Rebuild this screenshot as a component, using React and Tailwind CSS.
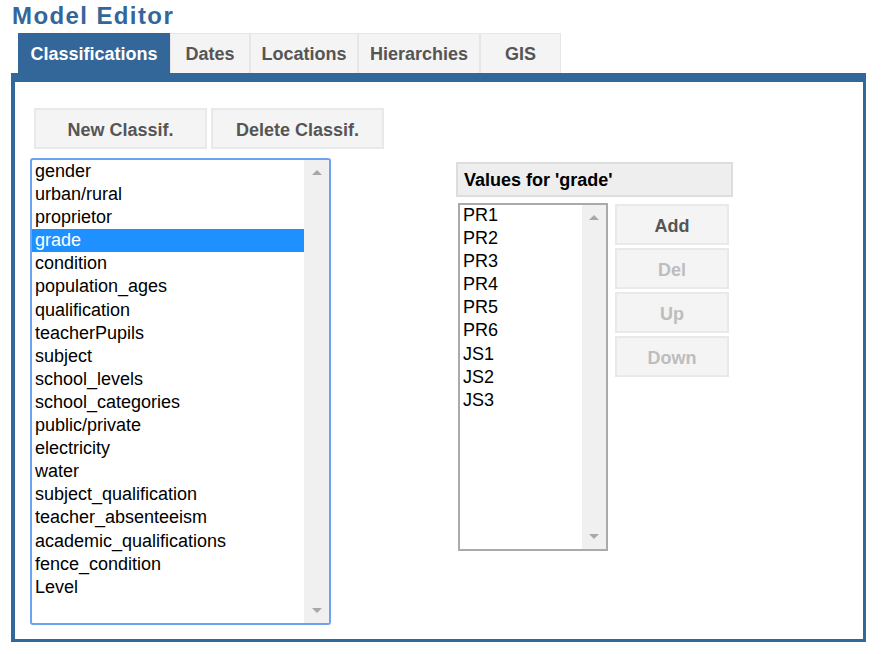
import React, { useState } from 'react';

const tabs = [
  { id: 'classifications', label: 'Classifications', w: 'w-[152px]' },
  { id: 'dates', label: 'Dates', w: 'w-[80px]' },
  { id: 'locations', label: 'Locations', w: 'w-[108px]' },
  { id: 'hierarchies', label: 'Hierarchies', w: 'w-[122px]' },
  { id: 'gis', label: 'GIS', w: 'w-[81px]' },
];

const classifications = [
  'gender', 'urban/rural', 'proprietor', 'grade', 'condition', 'population_ages',
  'qualification', 'teacherPupils', 'subject', 'school_levels', 'school_categories',
  'public/private', 'electricity', 'water', 'subject_qualification',
  'teacher_absenteeism', 'academic_qualifications', 'fence_condition', 'Level',
];

const values = ['PR1', 'PR2', 'PR3', 'PR4', 'PR5', 'PR6', 'JS1', 'JS2', 'JS3'];

function Scrollbar({ w }) {
  return (
    <div className={`${w} shrink-0 bg-[#f0f0f0] flex flex-col items-center justify-between py-[10px]`}>
      <div className="w-0 h-0 border-l-[5px] border-r-[5px] border-b-[5px] border-l-transparent border-r-transparent border-b-[#a8a8a8]" />
      <div className="w-0 h-0 border-l-[5px] border-r-[5px] border-t-[5px] border-l-transparent border-r-transparent border-t-[#a8a8a8]" />
    </div>
  );
}

function Btn({ children, disabled, className = '' }) {
  return (
    <button
      className={`shrink-0 pt-[3px] bg-[#f4f4f4] border-2 border-[#e9e9e9] font-bold text-[18px] ${
        disabled ? 'text-[#bdbdbd]' : 'text-[#555]'
      } ${className}`}
    >
      {children}
    </button>
  );
}

export default function App() {
  const [activeTab, setActiveTab] = useState('classifications');
  const [selected, setSelected] = useState('grade');

  return (
    <div className="w-[882px] h-[654px] bg-white pl-[11px] pt-[2px] font-['Liberation_Sans',Arial,sans-serif] text-black">
      <h1 className="text-[24px] leading-[28px] font-bold tracking-[1.4px] text-[#336699] ml-[1px]">
        Model Editor
      </h1>

      {/* Tabs */}
      <div className="flex ml-[7px] mt-[3px]">
        {tabs.map((tab) => (
          <button
            key={tab.id}
            onClick={() => setActiveTab(tab.id)}
            className={`${tab.w} h-[40px] pt-[2px] text-[18px] font-bold border border-b-0 ${
              activeTab === tab.id
                ? 'bg-[#336699] border-[#336699] text-white'
                : 'bg-[#f4f4f4] border-[#e6e6e6] text-[#555]'
            }`}
          >
            {tab.label}
          </button>
        ))}
      </div>

      {/* Panel */}
      <div className="w-[855px] h-[569px] border-[#336699] border-t-[9px] border-l-4 border-r-[3px] border-b-[3px] pl-[15px] pt-[26px] flex">
        {/* Left column */}
        <div className="w-[301px] shrink-0 flex flex-col">
          <div className="flex gap-[4px] ml-[4px]">
            <Btn className="w-[173px] h-[41px]">New Classif.</Btn>
            <Btn className="w-[173px] h-[41px]">Delete Classif.</Btn>
          </div>
          <div className="mt-[9px] h-[467px] border-2 border-[#6ea2ee] rounded-[3px] flex overflow-hidden">
            <div className="flex-1">
              {classifications.map((c) => (
                <div
                  key={c}
                  onClick={() => setSelected(c)}
                  className={`h-[23.1px] leading-[23px] text-[18px] pl-[3px] ${
                    selected === c ? 'bg-[#1e90ff] text-white' : ''
                  }`}
                >
                  {c}
                </div>
              ))}
            </div>
            <Scrollbar w="w-[25px]" />
          </div>
        </div>

        {/* Right column */}
        <div className="ml-[125px] mt-[54px] flex flex-col">
          <div className="w-[277px] h-[35px] bg-[#eeeeee] border-2 border-[#dddddd] pl-[6px] font-bold text-[18px] leading-[32px]">
            Values for '{selected}'
          </div>
          <div className="flex mt-[6px] ml-[2px]">
            <div className="w-[150px] h-[348px] border-2 border-[#aaaaaa] flex">
              <div className="flex-1">
                {values.map((v) => (
                  <div key={v} className="h-[23.1px] leading-[21px] text-[18px] pl-[3px]">
                    {v}
                  </div>
                ))}
              </div>
              <Scrollbar w="w-[24px]" />
            </div>
            <div className="ml-[7px] mt-[1px] flex flex-col gap-[3px]">
              <Btn className="w-[114px] h-[41px]">Add</Btn>
              <Btn disabled className="w-[114px] h-[41px]">Del</Btn>
              <Btn disabled className="w-[114px] h-[41px]">Up</Btn>
              <Btn disabled className="w-[114px] h-[41px]">Down</Btn>
            </div>
          </div>
        </div>
      </div>
    </div>
  );
}
